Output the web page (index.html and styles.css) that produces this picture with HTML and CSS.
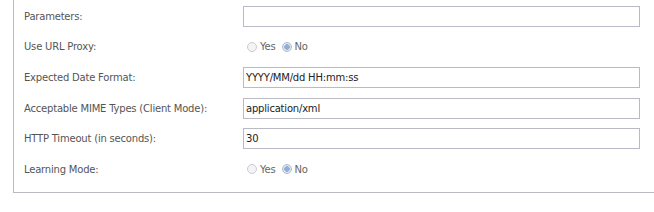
FILE: index.html
```html
<!DOCTYPE html>
<html>
<head>
<meta charset="utf-8">
<title>Settings</title>
<link rel="stylesheet" href="styles.css">
</head>
<body>
	<div class="panel">
		<div class="row">
			<label class="lbl">Parameters:</label>
			<input class="txt" type="text" value="">
		</div>
		<div class="row">
			<label class="lbl">Use URL Proxy:</label>
			<div class="radios">
				<label><input type="radio" name="proxy"> Yes</label>
				<label><input type="radio" name="proxy" checked> No</label>
			</div>
		</div>
		<div class="row">
			<label class="lbl">Expected Date Format:</label>
			<input class="txt" type="text" value="YYYY/MM/dd HH:mm:ss">
		</div>
		<div class="row">
			<label class="lbl">Acceptable MIME Types (Client Mode):</label>
			<input class="txt" type="text" value="application/xml">
		</div>
		<div class="row">
			<label class="lbl">HTTP Timeout (in seconds):</label>
			<input class="txt" type="text" value="30">
		</div>
		<div class="row">
			<label class="lbl">Learning Mode:</label>
			<div class="radios">
				<label><input type="radio" name="learn"> Yes</label>
				<label><input type="radio" name="learn" checked> No</label>
			</div>
		</div>
	</div>
</body>
</html>
```

FILE: styles.css
```css
*{margin:0; padding:0; box-sizing:border-box;}
body{background:#fff; font-family:"DejaVu Sans", Verdana, sans-serif; font-size:10px; color:#555;}

.panel{margin-left:13px; border-left:1px solid #b8bbc6; border-bottom:1px solid #b8bbc6; padding:1px 0 7px 10px;}
.row{height:30.6px; display:flex; align-items:center;}
.lbl{width:219px; flex:none; letter-spacing:-0.2px;}
.txt{width:397px; height:21px; border:1px solid #b8bbc6; padding:0 2px; font-family:"DejaVu Sans", Verdana, sans-serif; font-size:10px; letter-spacing:-0.2px; color:#222; outline:none;}

/*单选*/
.radios{display:flex; align-items:center; padding-left:4px; color:#666; letter-spacing:-0.2px;}
.radios label{display:flex; align-items:center; margin-right:6px;}
.radios input{appearance:none; -webkit-appearance:none; width:10px; height:10px; border:1px solid #c9ccd2; border-radius:50%; background:#f3f4f6; margin-right:3px;}
.radios input:checked{background:radial-gradient(circle, #8fb0d6 0, #8fb0d6 2.5px, #dfe5ee 3px);border-color:#b5bcc8;}
```
